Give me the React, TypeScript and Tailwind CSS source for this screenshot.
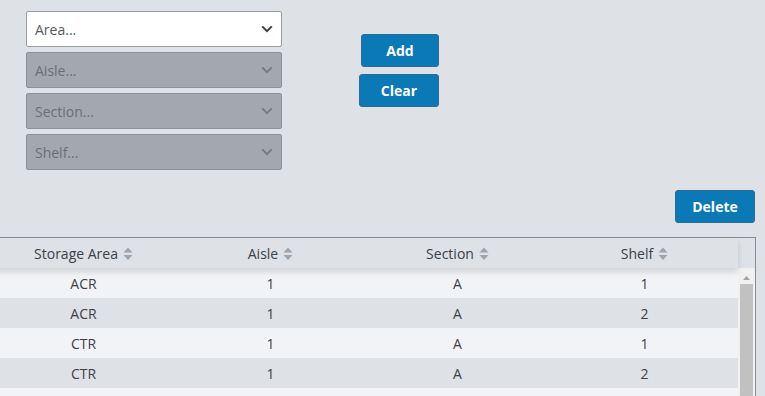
import type { ReactNode } from 'react';

const rows = [
  { area: 'ACR', aisle: '1', section: 'A', shelf: '1' },
  { area: 'ACR', aisle: '1', section: 'A', shelf: '2' },
  { area: 'CTR', aisle: '1', section: 'A', shelf: '1' },
  { area: 'CTR', aisle: '1', section: 'A', shelf: '2' },
];

function Chevron({ dim }: { dim?: boolean }) {
  return (
    <svg width="12" height="8" viewBox="0 0 12 8" className={dim ? 'text-[#767b82]' : 'text-[#3c3f44]'}>
      <path d="M1.2 1.4 6 6.2l4.8-4.8" fill="none" stroke="currentColor" strokeWidth="2" />
    </svg>
  );
}

function Select({ label, disabled }: { label: string; disabled?: boolean }) {
  return (
    <div
      className={`flex h-[36px] items-center justify-between rounded-[2px] border pl-[8px] pr-[8px] text-[14px] ${
        disabled ? 'border-[#8d9298] bg-[#a3a8ae] text-[#6a6f76]' : 'border-[#9a9ea4] bg-white text-[#555a60]'
      }`}
    >
      <span>{label}</span>
      <Chevron dim={disabled} />
    </div>
  );
}

function Btn({ children, className = '' }: { children: ReactNode; className?: string }) {
  return (
    <button
      className={`flex h-[33px] items-center justify-center rounded-[3px] border border-[#2d6c92] bg-[#0a79b6] text-[14px] font-bold text-white ${className}`}
    >
      {children}
    </button>
  );
}

function SortIcon() {
  return (
    <svg width="10" height="15" viewBox="0 0 10 15" className="ml-[5px]">
      <path d="M5 1.5 9.5 6.5H0.5Z" fill="#a0a4aa" />
      <path d="M5 14 9.5 9H0.5Z" fill="#a0a4aa" />
    </svg>
  );
}

const cols = ['Storage Area', 'Aisle', 'Section', 'Shelf'];

export default function App() {
  return (
    <div className="h-[396px] overflow-hidden bg-[#dee1e6] font-['Open_Sans',sans-serif] text-[#3d4046]">
      <div className="flex pl-[26px] pt-[11px]">
        <div className="flex w-[256px] flex-col gap-[5px]">
          <Select label="Area..." />
          <Select label="Aisle..." disabled />
          <Select label="Section..." disabled />
          <Select label="Shelf..." disabled />
        </div>
        <div className="ml-[77px] mt-[23px] flex flex-col gap-[7px]">
          <Btn className="ml-[2px] w-[78px]">Add</Btn>
          <Btn className="w-[80px]">Clear</Btn>
        </div>
      </div>

      <div className="mt-[20px] flex justify-end pr-[10px]">
        <Btn className="w-[80px]">Delete</Btn>
      </div>

      <div className="-ml-[11px] mt-[14px] flex h-[200px] w-[767px] border border-[#878c93]">
        <div className="w-[748px]">
          <div className="relative z-10 flex h-[30px] bg-[#dee1e6] shadow-[0_4px_6px_rgba(0,0,0,0.13)]">
            {cols.map((c) => (
              <div key={c} className="flex w-[187px] items-center justify-center text-[14px] text-[#3d4046]">
                {c}
                <SortIcon />
              </div>
            ))}
          </div>
          {rows.map((r, i) => (
            <div key={i} className={`flex h-[30px] text-[14px] ${i % 2 ? 'bg-[#dee1e6]' : 'bg-[#f2f3f7]'}`}>
              {[r.area, r.aisle, r.section, r.shelf].map((v, j) => (
                <div key={j} className="flex w-[187px] items-center justify-center">
                  {v}
                </div>
              ))}
            </div>
          ))}
          <div className="h-[30px] bg-[#f2f3f7]" />
        </div>
        <div className="flex w-[17px] flex-col">
          <div className="h-[30px] bg-[#dee1e6]" />
          <div className="flex flex-1 flex-col bg-[#f1f1f1] pt-[6px]">
            <svg width="17" height="8" viewBox="0 0 17 8">
              <path d="M8.5 2 12 6H5Z" fill="#a3a3a3" />
            </svg>
            <div className="mx-[2px] mt-[2px] flex-1 bg-[#c1c1c1]" />
          </div>
        </div>
      </div>
    </div>
  );
}
